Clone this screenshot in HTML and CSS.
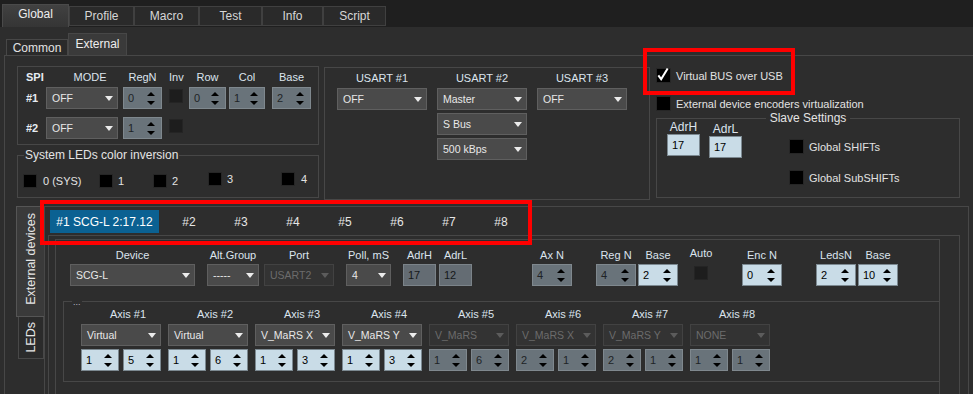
FILE: index.html
```html
<!DOCTYPE html>
<html>
<head>
    <meta charset="UTF-8">
    <meta name="viewport" content="width=device-width, initial-scale=1.0">
    <title>Global - External</title>
    <link rel="stylesheet" href="styles.css">
</head>
<body>
    <div class="top-tabs">
        <div class="tab active">Global</div>
        <div class="tab t-profile">Profile</div>
        <div class="tab t-macro">Macro</div>
        <div class="tab t-test">Test</div>
        <div class="tab t-info">Info</div>
        <div class="tab t-script">Script</div>
    </div>
    <div class="sub-tabs">
        <div class="subtab">Common</div>
        <div class="subtab active">External</div>
    </div>

    <div class="panel">
        <div class="upper">
            <div class="left-col">
                <div class="group spi">
                    <div class="spi-row spi-head">
                        <span class="c-lbl strong">SPI</span>
                        <span class="c-mode head-mode">MODE</span>
                        <span class="c-regn">RegN</span>
                        <span class="c-inv">Inv</span>
                        <span class="c-row">Row</span>
                        <span class="c-col">Col</span>
                        <span class="c-base">Base</span>
                    </div>
                    <div class="spi-row">
                        <span class="c-lbl strong">#1</span>
                        <div class="combo c-mode">OFF</div>
                        <div class="spin dim c-regn">0<i class="ud"></i></div>
                        <span class="cb dim c-inv"></span>
                        <div class="spin dim c-row">0<i class="ud"></i></div>
                        <div class="spin dim c-col">1<i class="ud"></i></div>
                        <div class="spin dim c-base">2<i class="ud"></i></div>
                    </div>
                    <div class="spi-row second">
                        <span class="c-lbl strong">#2</span>
                        <div class="combo c-mode">OFF</div>
                        <div class="spin dim c-regn">1<i class="ud"></i></div>
                        <span class="cb dim c-inv"></span>
                    </div>
                </div>

                <div class="group leds">
                    <span class="gtitle">System LEDs color inversion</span>
                    <div class="led-row">
                        <div class="led l0"><span class="cb"></span><span>0 (SYS)</span></div>
                        <div class="led l1"><span class="cb"></span><span>1</span></div>
                        <div class="led l2"><span class="cb"></span><span>2</span></div>
                        <div class="led l3 hi"><span class="cb"></span><span>3</span></div>
                        <div class="led l4 hi"><span class="cb"></span><span>4</span></div>
                    </div>
                </div>
            </div>

            <div class="group usart">
                <div class="ucol">
                    <span class="ulabel">USART #1</span>
                    <div class="combo">OFF</div>
                </div>
                <div class="ucol">
                    <span class="ulabel">USART #2</span>
                    <div class="combo">Master</div>
                    <div class="combo">S Bus</div>
                    <div class="combo">500 kBps</div>
                </div>
                <div class="ucol">
                    <span class="ulabel">USART #3</span>
                    <div class="combo">OFF</div>
                </div>
            </div>

            <div class="right-col">
                <div class="chk-row first">
                    <span class="cb big">
                        <svg width="15" height="15" viewBox="0 0 15 15"><path d="M2.5 8.5 L5.5 12.5 L12.5 1" fill="none" stroke="#fff" stroke-width="2.2"/></svg>
                    </span>
                    <span>Virtual BUS over USB</span>
                </div>
                <div class="chk-row second">
                    <span class="cb big"></span>
                    <span>External device encoders virtualization</span>
                </div>
                <div class="group slave">
                    <span class="gtitle centered">Slave Settings</span>
                    <div class="slave-body">
                        <div class="adr">
                            <span class="adr-label">AdrH</span>
                            <div class="edit">17</div>
                        </div>
                        <div class="adr low">
                            <span class="adr-label">AdrL</span>
                            <div class="edit">17</div>
                        </div>
                        <div class="shifts">
                            <div class="chk-row"><span class="cb big"></span><span>Global SHIFTs</span></div>
                            <div class="chk-row"><span class="cb big"></span><span>Global SubSHIFTs</span></div>
                        </div>
                    </div>
                </div>
            </div>
        </div>

        <div class="lower">
            <div class="vtabs">
                <div class="vtab active"><span>External devices</span></div>
                <div class="vtab leds-tab"><span>LEDs</span></div>
            </div>
            <div class="vpanel">
                <div class="htabs">
                    <div class="htab active">#1 SCG-L 2:17.12</div>
                    <div class="htab first">#2</div>
                    <div class="htab">#3</div>
                    <div class="htab">#4</div>
                    <div class="htab">#5</div>
                    <div class="htab">#6</div>
                    <div class="htab">#7</div>
                    <div class="htab">#8</div>
                </div>
                <div class="hpanel">
                    <div class="device-box">
                        <div class="dev-row">
                            <div class="field f-device"><span class="flabel">Device</span><div class="combo">SCG-L</div></div>
                            <div class="field f-alt"><span class="flabel">Alt.Group</span><div class="combo">-----</div></div>
                            <div class="field f-port"><span class="flabel">Port</span><div class="combo off">USART2</div></div>
                            <div class="field f-poll"><span class="flabel">Poll, mS</span><div class="combo">4</div></div>
                            <div class="field f-adrh"><span class="flabel">AdrH</span><div class="edit dim">17</div></div>
                            <div class="field f-adrl"><span class="flabel">AdrL</span><div class="edit dim">12</div></div>
                            <div class="field f-axn"><span class="flabel">Ax N</span><div class="spin dim">4<i class="ud"></i></div></div>
                            <div class="field f-regn"><span class="flabel">Reg N</span><div class="spin dim">4<i class="ud"></i></div></div>
                            <div class="field f-base"><span class="flabel">Base</span><div class="spin">2<i class="ud"></i></div></div>
                            <div class="field f-auto"><span class="flabel">Auto</span><span class="cb dim"></span></div>
                            <div class="field f-enc"><span class="flabel">Enc N</span><div class="spin">0<i class="ud"></i></div></div>
                            <div class="field f-leds"><span class="flabel">LedsN</span><div class="spin">2<i class="ud"></i></div></div>
                            <div class="field f-base2"><span class="flabel">Base</span><div class="spin">10<i class="ud"></i></div></div>
                        </div>

                        <div class="group axes">
                            <span class="gtitle dots">...</span>
                            <div class="axis-row">
                                <div class="axis">
                                    <span class="alabel">Axis #1</span>
                                    <div class="combo">Virtual</div>
                                    <div class="pair"><div class="spin">1<i class="ud"></i></div><div class="spin">5<i class="ud"></i></div></div>
                                </div>
                                <div class="axis">
                                    <span class="alabel">Axis #2</span>
                                    <div class="combo">Virtual</div>
                                    <div class="pair"><div class="spin">1<i class="ud"></i></div><div class="spin">6<i class="ud"></i></div></div>
                                </div>
                                <div class="axis">
                                    <span class="alabel">Axis #3</span>
                                    <div class="combo">V_MaRS X</div>
                                    <div class="pair"><div class="spin">1<i class="ud"></i></div><div class="spin">3<i class="ud"></i></div></div>
                                </div>
                                <div class="axis">
                                    <span class="alabel">Axis #4</span>
                                    <div class="combo">V_MaRS Y</div>
                                    <div class="pair"><div class="spin">1<i class="ud"></i></div><div class="spin">3<i class="ud"></i></div></div>
                                </div>
                                <div class="axis">
                                    <span class="alabel">Axis #5</span>
                                    <div class="combo off">V_MaRS</div>
                                    <div class="pair"><div class="spin dim">1<i class="ud"></i></div><div class="spin dim">6<i class="ud"></i></div></div>
                                </div>
                                <div class="axis">
                                    <span class="alabel">Axis #6</span>
                                    <div class="combo off">V_MaRS X</div>
                                    <div class="pair"><div class="spin dim">2<i class="ud"></i></div><div class="spin dim">1<i class="ud"></i></div></div>
                                </div>
                                <div class="axis">
                                    <span class="alabel">Axis #7</span>
                                    <div class="combo off">V_MaRS Y</div>
                                    <div class="pair"><div class="spin dim">2<i class="ud"></i></div><div class="spin dim">1<i class="ud"></i></div></div>
                                </div>
                                <div class="axis">
                                    <span class="alabel">Axis #8</span>
                                    <div class="combo off">NONE</div>
                                    <div class="pair"><div class="spin dim">1<i class="ud"></i></div><div class="spin dim">1<i class="ud"></i></div></div>
                                </div>
                            </div>
                        </div>
                    </div>
                </div>
            </div>
        </div>
    </div>

    <!-- red highlight frames drawn over the form -->
    <div class="mark mark-usb"></div>
    <div class="mark mark-tabs"></div>
</body>
</html>
```

FILE: styles.css
```css
* {
    box-sizing: border-box;
}
body {
    margin: 0;
    width: 973px;
    height: 394px;
    overflow: hidden;
    position: relative;
    background: #2d2d2d;
    font-family: "Liberation Sans", Arial, sans-serif;
    font-size: 11px;
    color: #e2e2e2;
}

/* top tabs */
.top-tabs {
    height: 27px;
    background: #1f1f1f;
    display: flex;
    align-items: flex-end;
    padding-left: 2px;
}
.tab {
    height: 20px;
    margin-bottom: 1px;
    border: 1px solid #404040;
    background: #2a2a2a;
    color: #d6d6d6;
    font-size: 12px;
    display: flex;
    align-items: center;
    justify-content: center;
}
.tab.active {
    width: 67px;
    height: 23px;
    margin-bottom: 0;
    padding-bottom: 4px;
    border-color: #4a4a4a;
    border-bottom: none;
    background: linear-gradient(#414141, #353535);
    color: #eee;
}
.t-profile { width: 65px; }
.t-macro { width: 65px; }
.t-test { width: 63px; }
.t-info { width: 61px; }
.t-script { width: 63px; }

.sub-tabs {
    height: 28px;
    display: flex;
    align-items: flex-end;
    padding-left: 6px;
}
.subtab {
    width: 62px;
    height: 16px;
    border: 1px solid #474747;
    border-bottom: none;
    background: #2a2a2a;
    font-size: 12px;
    display: flex;
    align-items: center;
    justify-content: center;
}
.subtab.active {
    width: 59px;
    height: 22px;
    padding-bottom: 2px;
    background: #3a3a3a;
    color: #eee;
}

/* main panel */
.panel {
    margin-left: 4px;
    width: 980px;
    height: 345px;
    border: 1px solid #474747;
    border-right: none;
}
.upper {
    height: 150px;
    padding: 10px 0 0 12px;
    display: flex;
    align-items: flex-start;
}
.group {
    border: 1px solid #474747;
}
.gtitle {
    display: block;
    width: fit-content;
    margin: -8px 0 0 6px;
    padding: 0 1px;
    background: #2d2d2d;
    font-size: 12px;
    line-height: 14px;
    color: #e4e4e4;
}
.gtitle.centered {
    margin-left: auto;
    margin-right: auto;
    padding: 0 4px;
}
.gtitle.dots {
    margin: -5px 0 0 8px;
    font-size: 9px;
    line-height: 10px;
    color: #b8b8c8;
}

/* controls */
.combo {
    height: 22px;
    display: flex;
    align-items: center;
    padding-left: 5px;
    background: #4a4a4a;
    border: 1px solid #5f5f5f;
    color: #e8e8e8;
    font-size: 10.5px;
    white-space: nowrap;
}
.combo::after {
    content: '';
    margin-left: auto;
    margin-right: 4px;
    border-left: 4px solid transparent;
    border-right: 4px solid transparent;
    border-top: 5px solid #ececec;
}
.combo.off {
    background: #333;
    border-color: #424242;
    color: #6c6c6c;
}
.combo.off::after {
    border-top-color: #5c5c5c;
}
.spin {
    height: 22px;
    display: flex;
    align-items: center;
    padding-left: 4px;
    background: #c9dce7;
    border: 1px solid #7c8991;
    color: #000;
    font-size: 11px;
}
.spin.dim {
    background: #69737a;
    border-color: #7f888e;
    color: #202326;
}
.ud {
    margin-left: auto;
    margin-right: 6px;
    display: flex;
    flex-direction: column;
    gap: 5px;
}
.ud::before {
    content: '';
    border-left: 4px solid transparent;
    border-right: 4px solid transparent;
    border-bottom: 4px solid #000;
}
.ud::after {
    content: '';
    border-left: 4px solid transparent;
    border-right: 4px solid transparent;
    border-top: 4px solid #000;
}
.edit {
    height: 22px;
    display: flex;
    align-items: center;
    padding-left: 4px;
    background: #c9dce7;
    border: 1px solid #7c8991;
    color: #000;
    font-size: 11px;
}
.edit.dim {
    background: #646c73;
    border-color: #7b8389;
    color: #15181a;
}
.cb {
    flex: none;
    width: 14px;
    height: 14px;
    background: #000;
    border: 1px solid #262626;
}
.cb.dim {
    background: #1d1d1d;
    border-color: #242424;
}
.cb.big {
    width: 15px;
    height: 15px;
    display: flex;
}
.cb svg {
    margin: -2px 0 0 -1px;
}

/* SPI block */
.left-col {
    width: 302px;
    display: flex;
    flex-direction: column;
}
.spi {
    height: 79px;
}
.spi-row {
    display: flex;
    align-items: flex-start;
    height: 22px;
}
.spi-row.second {
    margin-top: 8px;
}
.spi-head {
    height: 20px;
    line-height: 20px;
    color: #dce4ed;
}
.spi-head span {
    text-align: center;
    white-space: nowrap;
}
.spi-head .c-lbl {
    text-align: left;
}
.head-mode {
    padding-left: 16px;
}
.strong {
    font-weight: bold;
    color: #e6ecf2;
}
.c-lbl { width: 28px; padding-left: 8px; line-height: 22px; }
.spi-head .c-lbl { line-height: 20px; }
.c-mode { width: 72px; }
.c-regn { width: 39px; margin-left: 5px; }
.c-inv { width: 14px; margin-left: 7px; }
.spi-row .cb.c-inv { margin-top: 2px; }
.c-row { width: 37px; margin-left: 6px; }
.c-col { width: 36px; margin-left: 3px; }
.c-base { width: 39px; margin-left: 7px; }

.leds {
    margin-top: 10px;
    height: 43px;
}
.led-row {
    margin-top: 12px;
    display: flex;
    align-items: center;
    height: 14px;
}
.led {
    display: flex;
    align-items: center;
    gap: 5px;
}
.l0 { width: 76px; margin-left: 5px; gap: 6px; }
.l1 { width: 54px; }
.l2 { width: 55px; }
.l3 { width: 73px; }
.l4 { gap: 6px; }
.led.hi { margin-top: -4px; }

/* USART block */
.usart {
    width: 326px;
    height: 133px;
    margin: 1px 0 0 5px;
    padding-left: 12px;
    display: flex;
    gap: 10px;
}
.ucol {
    width: 90px;
    display: flex;
    flex-direction: column;
    gap: 3px;
}
.ulabel {
    height: 20px;
    line-height: 20px;
    margin-bottom: -3px;
    text-align: center;
    color: #dce4ed;
}

/* right column */
.right-col {
    width: 304px;
    margin-left: 6px;
    display: flex;
    flex-direction: column;
}
.chk-row {
    display: flex;
    align-items: center;
    gap: 5px;
    height: 15px;
    white-space: nowrap;
}
.chk-row.first { margin-top: 2px; }
.chk-row.second { margin-top: 13px; }
.slave {
    margin-top: 7px;
    height: 80px;
}
.slave-body {
    margin-top: -5px;
    padding-left: 10px;
    display: flex;
    align-items: flex-start;
}
.adr {
    width: 33px;
    display: flex;
    flex-direction: column;
    align-items: stretch;
}
.adr.low {
    margin: 2px 0 0 9px;
}
.adr-label {
    line-height: 14px;
    font-size: 12px;
    text-align: center;
    color: #dce4ed;
}
.shifts {
    margin-left: 47px;
    padding-top: 19px;
    display: flex;
    flex-direction: column;
    gap: 16px;
}

/* lower: external devices */
.lower {
    display: flex;
    padding-left: 11px;
}
.vtabs {
    width: 28px;
    display: flex;
    flex-direction: column;
}
.vtab {
    display: flex;
    align-items: center;
    justify-content: center;
    border: 1px solid #484848;
    background: #2b2b2b;
    font-size: 12.5px;
    color: #e6e6e6;
}
.vtab span {
    writing-mode: vertical-rl;
    transform: rotate(180deg);
    white-space: nowrap;
}
.vtab.active {
    width: 29px;
    height: 111px;
    padding-bottom: 5px;
    background: #3a3a3a;
    border-color: #555;
    border-right: none;
}
.leds-tab {
    width: 26px;
    height: 42px;
    margin-left: 2px;
    border-top: none;
}
.vpanel {
    width: 925px;
    height: 200px;
    border: 1px solid #474747;
}
.htabs {
    display: flex;
    padding: 3px 0 0 5px;
}
.htab {
    width: 52px;
    height: 23px;
    display: flex;
    align-items: center;
    justify-content: center;
    font-size: 12px;
    color: #e6e6e6;
}
.htab.active {
    width: 109px;
    background: #0b6192;
    color: #fff;
}
.htab.first {
    margin-left: 4px;
}
.hpanel {
    width: 912px;
    height: 170px;
    margin: 2px 0 0 3px;
    border: 1px solid #474747;
}
.device-box {
    width: 885px;
    height: 170px;
    margin: 3px 0 0 6px;
    border: 1px solid #474747;
}
.dev-row {
    display: flex;
    align-items: flex-start;
    padding-top: 8px;
}
.field {
    display: flex;
    flex-direction: column;
    align-items: center;
}
.field .combo,
.field .spin,
.field .edit {
    width: 100%;
}
.flabel {
    line-height: 14px;
    margin-bottom: 2px;
    white-space: nowrap;
    color: #dce4ed;
}
.f-device { width: 125px; margin-left: 14px; }
.f-alt { width: 52px; margin-left: 12px; }
.f-port { width: 70px; margin-left: 5px; }
.f-poll { width: 45px; margin-left: 12px; }
.f-adrh { width: 33px; margin-left: 12px; }
.f-adrl { width: 33px; margin-left: 3px; }
.f-axn { width: 40px; margin-left: 60px; }
.f-regn { width: 40px; margin-left: 24px; }
.f-base { width: 40px; margin-left: 2px; }
.f-auto { width: 30px; margin-left: 8px; }
.f-auto .flabel { margin-top: -2px; margin-bottom: 6px; }
.f-enc { width: 40px; margin-left: 26px; }
.f-leds { width: 40px; margin-left: 34px; }
.f-base2 { width: 40px; margin-left: 2px; }

.axes {
    width: 876px;
    height: 81px;
    margin: 15px 0 0 7px;
    border-right: none;
}
.axis-row {
    display: flex;
    gap: 7px;
    padding-left: 17px;
}
.axis {
    width: 80px;
    display: flex;
    flex-direction: column;
    gap: 3px;
}
.alabel {
    line-height: 14px;
    padding-left: 14px;
    text-align: center;
    white-space: nowrap;
    color: #dce4ed;
}
.pair {
    display: flex;
    justify-content: space-between;
}
.pair .spin {
    width: 38px;
}

/* highlight frames */
.mark {
    position: absolute;
    border: 4px solid #f00;
}
.mark-usb {
    left: 643px;
    top: 48px;
    width: 152px;
    height: 47px;
}
.mark-tabs {
    left: 40px;
    top: 200px;
    width: 492px;
    height: 45px;
}
```
